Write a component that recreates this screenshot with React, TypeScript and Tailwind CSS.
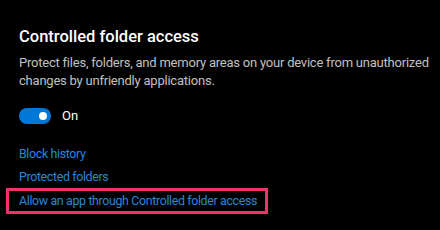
// ─── Controlled folder access panel ──────────────────────
const FONT = { fontFamily: 'Roboto, "Liberation Sans", sans-serif' }

function Toggle({ on = true }: { on?: boolean }) {
  return (
    <div
      className={[
        'w-[32px] h-[16px] rounded-full flex items-center px-[4px]',
        on ? 'bg-[#0078d7] justify-end' : 'bg-transparent border-2 border-white justify-start',
      ].join(' ')}
    >
      <div className="w-[8px] h-[8px] rounded-full bg-white" />
    </div>
  )
}

const LINKS = ['Block history', 'Protected folders']

export default function App() {
  return (
    <div
      className="w-[440px] h-[230px] bg-black text-white overflow-hidden pl-[19px] pt-[26px]"
      style={FONT}
    >
      <h1 className="text-[16.5px] leading-[22px] font-medium text-white">
        Controlled folder access
      </h1>
      <p className="mt-[6px] text-[13px] leading-[18px] tracking-[-0.22px] text-[#c0c0c0] w-[420px]">
        Protect files, folders, and memory areas on your device from unauthorized
        changes by unfriendly applications.
      </p>

      <div className="mt-[18px] flex items-center gap-[11px]">
        <Toggle />
        <span className="text-[13px] leading-[16px] text-white">On</span>
      </div>

      <div className="mt-[21px] flex flex-col gap-[5px]">
        {LINKS.map(l => (
          <a key={l} className="text-[12.4px] leading-[18px] tracking-[-0.35px] text-[#2488dc] cursor-pointer">
            {l}
          </a>
        ))}
      </div>

      <div className="-ml-[13px] mt-[2px] w-[262px] h-[26px] border-[3px] border-[#f0326a] flex items-center pl-[10px]">
        <a className="text-[12.4px] leading-[18px] tracking-[-0.35px] text-[#2488dc] cursor-pointer whitespace-nowrap">
          Allow an app through Controlled folder access
        </a>
      </div>
    </div>
  )
}
